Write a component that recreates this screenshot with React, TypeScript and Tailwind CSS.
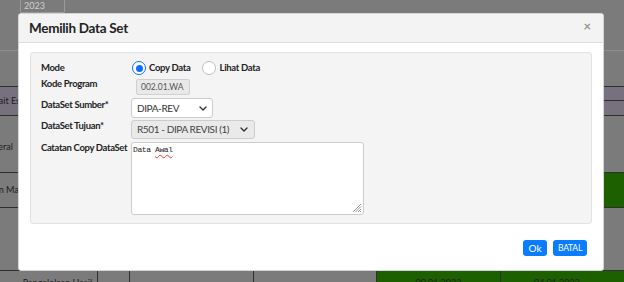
import React from "react";

const Chevron = () => (
  <svg width="8" height="5" viewBox="0 0 8 5">
    <path d="M1 1l3 3 3-3" fill="none" stroke="#333" strokeWidth="1.4" strokeLinecap="round" strokeLinejoin="round" />
  </svg>
);

const Radio = ({ checked }: { checked?: boolean }) => (
  <div
    className={
      checked
        ? "w-[14px] h-[14px] rounded-full border-[1.5px] border-[#0d6efd] bg-white flex items-center justify-center shrink-0"
        : "w-[14px] h-[14px] rounded-full border border-[#bdbdbd] bg-white shrink-0"
    }
  >
    {checked && <div className="w-[7px] h-[7px] rounded-full bg-[#0d6efd]" />}
  </div>
);

const label = "w-[90px] text-[9.5px] font-bold tracking-[-0.35px] whitespace-nowrap";

export default function App() {
  return (
    <div className="w-[624px] h-[282px] overflow-hidden relative bg-[#7b7b7b] font-['Lato',sans-serif]">
      {/* background page */}
      <div className="flex flex-col">
        <div className="h-[13px] pl-[20px]">
          <div className="w-[45px] h-[13px] border border-t-0 border-[#9a9a9a] rounded-b-[2px] text-[9px] text-[#d0d0d0] pl-[3px] leading-[11px]">
            2023
          </div>
        </div>
        <div className="h-[37px]" />
        <div className="h-px bg-[#8e8e8e]" />
        <div className="h-[35px]" />
        <div className="h-px bg-[#2e2e2e]" />
        <div className="h-[28px] bg-[#77717f] flex justify-between">
          <div className="w-[18px] overflow-hidden flex items-center">
            <span className="text-[9px] text-[#1e1e1e] -ml-[18px] whitespace-nowrap">Terkait Eselon</span>
          </div>
          <div className="w-[21px] flex flex-col">
            <div className="h-[13px]" />
            <div className="h-px bg-[#2e2e2e]" />
          </div>
        </div>
        <div className="h-px bg-[#2e2e2e]" />
        <div className="h-[56px] flex items-center">
          <div className="w-[18px] overflow-hidden">
            <span className="text-[9px] text-[#1e1e1e] -ml-[18px] whitespace-nowrap">General</span>
          </div>
        </div>
        <div className="h-px bg-[#2e2e2e]" />
        <div className="h-[34px] flex justify-between">
          <div className="w-[18px] overflow-hidden flex items-center">
            <span className="text-[9px] text-[#1e1e1e] -ml-[21px] whitespace-nowrap">Bahan Mar</span>
          </div>
          <div className="w-[21px] bg-[#1d6000]" />
        </div>
        <div className="h-px bg-[#2e2e2e]" />
        <div className="h-[62px]" />
        <div className="h-px bg-[#2e2e2e]" />
        <div className="h-[12px] flex text-[9px] text-[#1e1e1e]">
          <div className="w-[98px] border-r border-[#2e2e2e] text-right pr-[5px] pt-[5px] whitespace-nowrap overflow-hidden">Pengelolaan Hasil</div>
          <div className="w-[32px] border-r border-[#2e2e2e]" />
          <div className="w-[124px] border-r border-[#2e2e2e]" />
          <div className="w-[123px] border-r border-[#2e2e2e]" />
          <div className="w-[124px] border-r border-[#2e2e2e] bg-[#1d6000] text-center pt-[5px]">00.01.2023</div>
          <div className="flex-1 bg-[#1d6000]">
            <div className="w-[112px] text-center pt-[5px]">04.01.2023</div>
          </div>
        </div>
      </div>

      {/* modal */}
      <div className="absolute left-[18px] top-[13px] w-[586px] h-[258px] bg-white rounded-[3px] border border-[#d4d4d4] flex flex-col">
        <div className="h-[29px] bg-[#f3f3f3] border-b border-[#dedede] flex items-center justify-between pl-[10px] pr-[12px] rounded-t-[3px]">
          <div className="text-[13.5px] font-bold tracking-[-0.3px] text-[#222]">Memilih Data Set</div>
          <div className="text-[13px] font-bold text-[#939393] leading-none -mt-[4px]">×</div>
        </div>
        <div className="px-[11px] pt-[9px]">
          <div className="h-[172px] border border-[#e2e2e2] rounded-[3px] bg-[#f4f4f4] pl-[10px] pt-[7px] text-[#222]">
            {/* Mode */}
            <div className="flex items-center h-[16px]">
              <div className={label}>Mode</div>
              <div className="ml-[1px] flex items-center">
                <Radio checked />
                <span className="ml-[3px] text-[9.5px] font-bold tracking-[-0.3px]">Copy Data</span>
                <div className="ml-[11px]">
                  <Radio />
                </div>
                <span className="ml-[4px] text-[9.5px] font-bold tracking-[-0.3px]">Lihat Data</span>
              </div>
            </div>
            {/* Kode Program */}
            <div className="flex items-start h-[16px] mt-[3px]">
              <div className={label + " leading-[10px]"}>Kode Program</div>
              <div className="ml-[5px] w-[54px] h-[16px] bg-[#e9e9e9] border border-[#d0d0d0] rounded-[2px] text-[8.5px] text-[#555] pl-[4px] flex items-center whitespace-nowrap overflow-hidden">
                002.01.WA
              </div>
            </div>
            {/* DataSet Sumber */}
            <div className="flex items-start h-[20px] mt-[3px]">
              <div className={label + " leading-[13px]"}>DataSet Sumber*</div>
              <div className="w-[82px] h-[20px] bg-white border border-[#cccccc] rounded-[3px] pl-[5px] pr-[5px] flex items-center justify-between text-[10px] tracking-[-0.4px] text-[#333]">
                <span>DIPA-REV</span>
                <Chevron />
              </div>
            </div>
            {/* DataSet Tujuan */}
            <div className="flex items-start h-[19px] mt-[2px]">
              <div className={label + " leading-[11px]"}>DataSet Tujuan*</div>
              <div className="w-[124px] h-[19px] bg-[#eaeaea] border border-[#cdcdcd] rounded-[3px] pl-[5px] pr-[6px] flex items-center justify-between text-[10px] tracking-[-0.4px] text-[#444] whitespace-nowrap">
                <span>R501 - DIPA REVISI (1)</span>
                <Chevron />
              </div>
            </div>
            {/* Catatan */}
            <div className="flex items-start h-[73px] mt-[3px]">
              <div className={label + " leading-[11px]"}>Catatan Copy DataSet</div>
              <div className="relative w-[233px] h-[73px] bg-white border border-[#cccccc] rounded-[3px] pl-[1px] pt-[2px] font-['Liberation_Mono',monospace] text-[8px] tracking-[-0.4px] text-[#222] leading-[10px]">
                Data <span className="underline decoration-wavy decoration-[#e53935] decoration-1 underline-offset-2">Awal</span>
                <svg width="10" height="10" viewBox="0 0 10 10" className="absolute right-[1px] bottom-[1px]">
                  <path d="M9 1L1 9M9 3.5L3.5 9M9 6L6 9M9 8L8 9" stroke="#8a8a8a" strokeWidth="0.9" />
                </svg>
              </div>
            </div>
          </div>
        </div>
        <div className="flex justify-end gap-[6px] pr-[16px] mt-[16px]">
          <div className="w-[24px] h-[16px] rounded-[3px] bg-[#0a7cff] text-white text-[10px] flex items-center justify-center">Ok</div>
          <div className="w-[34px] h-[16px] rounded-[3px] bg-[#0a7cff] text-white text-[8.5px] tracking-[-0.2px] flex items-center justify-center">BATAL</div>
        </div>
      </div>
    </div>
  );
}
